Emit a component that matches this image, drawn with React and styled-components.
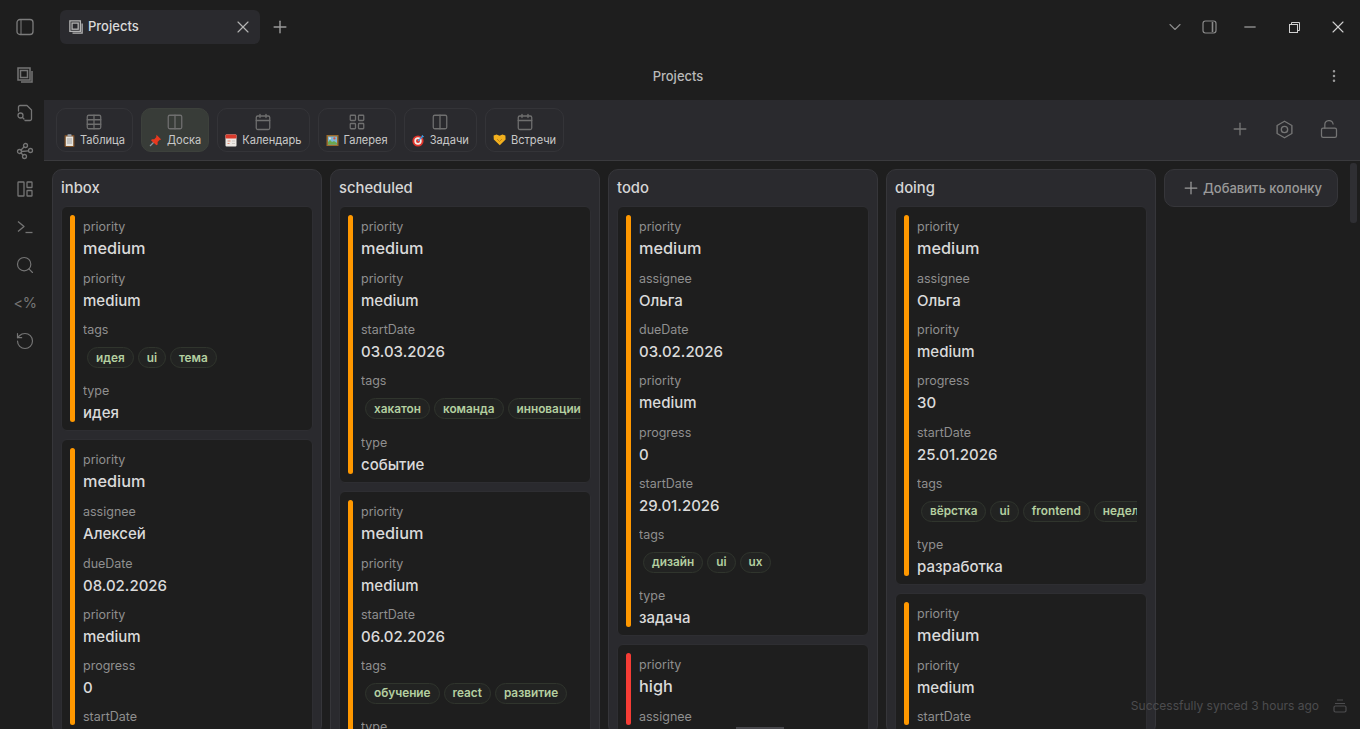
import React from 'react';
import styled, { createGlobalStyle } from 'styled-components';
import {
  Plus,
  X,
  ChevronDown,
  MoreVertical,
  Table,
  Columns2,
  Calendar,
  LayoutGrid,
  LockOpen,
  Search,
  RotateCcw,
  Minus,
} from 'lucide-react';

const GlobalStyle = createGlobalStyle`
  html, body {
    margin: 0;
    height: 100%;
    overflow: hidden;
    background: #1e1e1e;
  }
  body {
    font-family: Inter, "Liberation Sans", sans-serif;
    color: #dadada;
  }
  * { box-sizing: border-box; }
`;

const Stroke = ({ size = 18, children }) => (
  <svg width={size} height={size} viewBox="0 0 18 18" fill="none" stroke="currentColor" strokeWidth="1.3" strokeLinecap="round" strokeLinejoin="round">
    {children}
  </svg>
);

const SidebarIcon = () => (
  <Stroke>
    <rect x="1" y="1.5" width="16" height="15" rx="3" />
    <path d="M5 2v14" strokeWidth="1" />
  </Stroke>
);
const SidebarRightIcon = () => (
  <svg width="15" height="14" viewBox="0 0 15 14" fill="none" stroke="currentColor" strokeWidth="1.2">
    <rect x="1" y="1" width="13" height="12" rx="2.4" />
    <path d="M10.5 2v10" strokeWidth="1.6" />
  </svg>
);
const StackIcon = ({ size = 14 }) => (
  <svg width={size} height={size} viewBox="0 0 16 16" fill="none" stroke="currentColor" strokeWidth="1.5">
    <path d="M15 4v11H4" />
    <rect x="1" y="1" width="12" height="12" />
    <rect x="3.5" y="3.5" width="7" height="7" />
  </svg>
);
const RestoreIcon = () => (
  <svg width="11" height="11" viewBox="0 0 11 11" fill="none" stroke="currentColor" strokeWidth="1">
    <rect x="0.5" y="2.5" width="8" height="8" />
    <path d="M2.5 2.5v-2h8v8h-2" />
  </svg>
);
const FileFindIcon = () => (
  <Stroke>
    <path d="M2.5 7V3A1.5 1.5 0 0 1 4 1.5h7L15.5 6v9a1.5 1.5 0 0 1-1.5 1.5H9" />
    <circle cx="4.5" cy="11.5" r="2.5" />
    <path d="M6.5 13.5l1.5 1.5" />
  </Stroke>
);
const GraphIcon = () => (
  <Stroke>
    <circle cx="3.5" cy="9.5" r="2" />
    <circle cx="9.5" cy="3.5" r="2" />
    <circle cx="14.5" cy="8.5" r="2" />
    <circle cx="8.5" cy="14.5" r="2" />
    <path d="M5 8l3-3M5.5 9.5l7-.7M5 11l2 2" />
  </Stroke>
);
const CanvasIcon = () => (
  <Stroke>
    <rect x="2" y="2" width="6" height="14" rx="0.6" />
    <rect x="11" y="2" width="5" height="5.5" rx="0.6" />
    <rect x="11" y="10.5" width="5" height="5.5" rx="0.6" />
  </Stroke>
);
const PromptIcon = () => (
  <Stroke>
    <path d="M2 3.5l6 5-6 5" strokeLinecap="butt" />
    <path d="M9.5 14.5h7" strokeLinecap="butt" />
  </Stroke>
);
const SettingsIcon = () => (
  <svg width="19" height="19" viewBox="0 0 18 18" fill="none" stroke="currentColor" strokeWidth="1.3" strokeLinejoin="round">
    <path d="M9 1.2l7 4v7.6l-7 4-7-4V5.2z" />
    <circle cx="9" cy="9" r="3" />
  </svg>
);
const ArchiveIcon = () => (
  <svg width="14" height="15" viewBox="0 0 14 15" fill="none" stroke="currentColor" strokeWidth="1.2">
    <rect x="1" y="8" width="12" height="6" rx="1.4" />
    <path d="M2 5.5h10M4 2h6" />
  </svg>
);

const ClipboardEmoji = () => (
  <svg width="11" height="13" viewBox="0 0 11 13">
    <rect x="0.5" y="1" width="10" height="12" rx="1" fill="#7a4f28" />
    <rect x="1.8" y="2.5" width="7.4" height="9.5" fill="#e8e4dc" />
    <path d="M3 5h5M3 7h5M3 9h5" stroke="#8a8f98" strokeWidth="0.8" />
    <rect x="3.5" y="0.2" width="4" height="2.2" rx="0.5" fill="#9aa0a8" />
  </svg>
);
const PinEmoji = () => (
  <svg width="13" height="13" viewBox="0 0 13 13">
    <path d="M1 12l4-4" stroke="#8b97a3" strokeWidth="1.2" />
    <path d="M7.5.8l4.7 4.7-1.6.6-2 2 .1 2.4-1.2.7L2.1 6.4l.7-1.2 2.4.1 2-2z" fill="#e8391f" />
  </svg>
);
const CalendarEmoji = () => (
  <svg width="12" height="13" viewBox="0 0 12 13">
    <rect x="0.5" y="0.5" width="11" height="12" rx="1" fill="#ece8e4" />
    <rect x="0.5" y="0.5" width="11" height="4" rx="1" fill="#d93a2b" />
    <path d="M2.5 7h3M2.5 9.5h2" stroke="#e28a72" strokeWidth="1" />
    <path d="M7 7h3M7 9.5h3" stroke="#c9c6c2" strokeWidth="1" />
  </svg>
);
const PictureEmoji = () => (
  <svg width="13" height="13" viewBox="0 0 13 13">
    <rect x="0.5" y="1" width="12" height="11" fill="#9a6a2c" />
    <rect x="2" y="2.5" width="9" height="8" fill="#7cb7d8" />
    <path d="M2 10.5V8l2-2 2 2 2-1 3 2v1.5z" fill="#6aa84f" />
    <circle cx="8.4" cy="4.4" r="1.1" fill="#d9503f" />
    <rect x="3" y="3.5" width="1.8" height="1.8" fill="#e8e4dc" />
  </svg>
);
const TargetEmoji = () => (
  <svg width="13" height="13" viewBox="0 0 13 13">
    <circle cx="6" cy="7" r="5.6" fill="#e0342b" />
    <circle cx="6" cy="7" r="3.7" fill="#f1ece6" />
    <circle cx="6" cy="7" r="2" fill="#e0342b" />
    <path d="M6 7l5-5" stroke="#3f9be0" strokeWidth="1.2" />
    <path d="M10 .8l2.2 2.2-1.6.3-.9-.9z" fill="#3f9be0" />
  </svg>
);
const HandshakeEmoji = () => (
  <svg width="13" height="12" viewBox="0 0 13 12">
    <path d="M.6 1.5l3-.9 3 1.2 2.8-1.2 3 .9.2 4-5.8 5.8L.8 5.5z" fill="#f2b01e" />
    <path d="M4 5l2.5 2.5L9 5" stroke="#b97a10" strokeWidth="0.8" fill="none" />
  </svg>
);

const views = [
  { name: 'Таблица', icon: Table, emoji: ClipboardEmoji },
  { name: 'Доска', icon: Columns2, emoji: PinEmoji, active: true },
  { name: 'Календарь', icon: Calendar, emoji: CalendarEmoji },
  { name: 'Галерея', icon: LayoutGrid, emoji: PictureEmoji },
  { name: 'Задачи', icon: Columns2, emoji: TargetEmoji },
  { name: 'Встречи', icon: Calendar, emoji: HandshakeEmoji },
];

const med = ['priority', 'medium'];

const columns = [
  {
    title: 'inbox',
    cards: [
      { fields: [med, med, ['tags', ['идея', 'ui', 'тема']], ['type', 'идея']] },
      {
        fields: [med, ['assignee', 'Алексей'], ['dueDate', '08.02.2026'], med, ['progress', '0'], ['startDate']],
      },
    ],
  },
  {
    title: 'scheduled',
    cards: [
      {
        fields: [med, med, ['startDate', '03.03.2026'], ['tags', ['хакатон', 'команда', 'инновации']], ['type', 'событие']],
      },
      {
        fields: [med, med, ['startDate', '06.02.2026'], ['tags', ['обучение', 'react', 'развитие']], ['type']],
      },
    ],
  },
  {
    title: 'todo',
    cards: [
      {
        fields: [
          med,
          ['assignee', 'Ольга'],
          ['dueDate', '03.02.2026'],
          med,
          ['progress', '0'],
          ['startDate', '29.01.2026'],
          ['tags', ['дизайн', 'ui', 'ux']],
          ['type', 'задача'],
        ],
      },
      { high: true, fields: [['priority', 'high'], ['assignee']] },
    ],
  },
  {
    title: 'doing',
    cards: [
      {
        fields: [
          med,
          ['assignee', 'Ольга'],
          med,
          ['progress', '30'],
          ['startDate', '25.01.2026'],
          ['tags', ['вёрстка', 'ui', 'frontend', 'неделя']],
          ['type', 'разработка'],
        ],
      },
      { fields: [med, med, ['startDate']] },
    ],
  },
];

const Shell = styled.div`
  display: flex;
  flex-direction: column;
  height: 729px;
  width: 1360px;
  overflow: hidden;
  position: relative;
  background: #1e1e1e;
`;

const TitleBar = styled.div`
  display: flex;
  align-items: center;
  height: 54px;
  flex: none;
`;

const RibbonTop = styled.div`
  width: 50px;
  display: flex;
  justify-content: center;
  color: #7c7c7c;
`;

const Tab = styled.div`
  width: 200px;
  height: 34px;
  margin-left: 10px;
  border-radius: 6px;
  background: #2a2a2e;
  display: flex;
  align-items: center;
  gap: 5px;
  padding: 0 7px 0 9px;
  font-size: 13px;
  font-weight: 500;
  color: #dadada;
  svg { flex: none; color: #b3b3b3; }
`;

const TabLabel = styled.span`
  flex: 1;
  padding-bottom: 2px;
`;

const TabClose = styled.span`
  display: flex;
  color: #8f8f8f;
`;

const NewTab = styled.span`
  display: flex;
  margin-left: 10px;
  color: #9a9a9a;
`;

const Spacer = styled.div`
  flex: 1;
`;

const WinControls = styled.div`
  display: flex;
  align-items: center;
  color: #d0d0d0;
`;

const WinButton = styled.span`
  display: flex;
  justify-content: center;
  width: ${(p) => p.$w || 44}px;
  margin-right: ${(p) => p.$gap || 0}px;
  color: ${(p) => p.$color || '#d0d0d0'};
`;

const Body = styled.div`
  flex: 1;
  display: flex;
  min-height: 0;
`;

const Ribbon = styled.div`
  width: 44px;
  flex: none;
  display: flex;
  flex-direction: column;
  align-items: center;
  gap: 19px;
  padding: 11px 0 0 6px;
`;

const RibbonItem = styled.span`
  display: flex;
  justify-content: center;
  align-items: center;
  height: 19px;
  font-size: 14.5px;
  letter-spacing: -0.5px;
  color: #757575;
  svg { flex: none; }
`;

const Main = styled.div`
  flex: 1;
  display: flex;
  flex-direction: column;
  min-width: 0;
`;

const ViewHeader = styled.div`
  height: 46px;
  flex: none;
  display: flex;
  align-items: center;
  position: relative;
  padding: 0 18px 2px 0;
  justify-content: flex-end;
  color: #9a9a9a;
`;

const ViewTitle = styled.div`
  position: absolute;
  left: 0;
  right: 48px;
  text-align: center;
  font-size: 13px;
  font-weight: 500;
  color: #b9b9b9;
`;

const Toolbar = styled.div`
  height: 61px;
  flex: none;
  display: flex;
  align-items: flex-start;
  gap: 8px;
  padding: 8px 21px 0 12px;
  background: #2a2a2e;
  border-bottom: 1px solid #3a3a3d;
`;

const ViewTab = styled.div`
  height: 44px;
  display: flex;
  flex-direction: column;
  align-items: center;
  gap: 2px;
  padding: 4px 7px 0;
  border-radius: 10px;
  border: 1px solid ${(p) => (p.$active ? '#3d413c' : '#343438')};
  background: ${(p) => (p.$active ? '#383c38' : 'transparent')};
  color: #6f6f6f;
`;

const ViewName = styled.div`
  display: flex;
  align-items: center;
  gap: 5px;
  font-size: 11.1px;
  line-height: 14px;
  color: #c8c8c8;
  white-space: nowrap;
`;

const ToolActions = styled.div`
  margin-left: auto;
  display: flex;
  align-items: center;
  gap: 25px;
  height: 28px;
  margin-top: 7px;
  color: #757575;
`;

const Board = styled.div`
  flex: 1;
  min-height: 0;
  overflow: hidden;
  display: flex;
  align-items: flex-start;
  gap: 8px;
  padding: 8px 0 0 8px;
`;

const Column = styled.div`
  width: 270px;
  flex: none;
  background: #2a2a2e;
  border: 1px solid #36363a;
  border-radius: 10px;
  padding: 8px 8px 0;
  display: flex;
  flex-direction: column;
  gap: 8px;
`;

const ColumnTitle = styled.div`
  font-size: 14.8px;
  font-weight: 500;
  line-height: 20px;
  color: #d6d6d6;
`;

const Card = styled.div`
  background: #1e1e1e;
  border: 1px solid #2e2e32;
  border-radius: 6px;
  padding: 8px 9px 8px 8px;
  display: flex;
  gap: 8px;
  overflow: hidden;
`;

const Accent = styled.div`
  width: 5px;
  flex: none;
  border-radius: 3px;
  background: ${(p) => (p.$high ? '#f53c35' : '#ff9800')};
`;

const Fields = styled.div`
  flex: 1;
  min-width: 0;
  overflow: hidden;
  display: flex;
  flex-direction: column;
  gap: 11.2px;
  padding-top: 3px;
`;

const Field = styled.div`
  display: flex;
  flex-direction: column;
`;

const Label = styled.div`
  font-size: 12.5px;
  line-height: 17px;
  color: #8f8f8f;
`;

const Value = styled.div`
  font-size: ${(p) => (p.$big ? 16.3 : 15)}px;
  font-weight: 500;
  line-height: ${(p) => (p.$big ? 20 : 19)}px;
  margin-top: ${(p) => (p.$big ? 3 : 4)}px;
  padding-bottom: ${(p) => (p.$big ? 0.8 : 0)}px;
  color: #dadada;
`;

const Tags = styled.div`
  display: flex;
  gap: 4px;
  padding: 9px 4px 3px;
  white-space: nowrap;
`;

const Tag = styled.span`
  height: 21px;
  padding: 0 8px;
  display: flex;
  align-items: center;
  flex: none;
  border-radius: 11px;
  border: 1px solid #30352d;
  background: #222322;
  font-size: 11.8px;
  font-weight: 600;
  color: #b4cfa0;
`;

const AddColumn = styled.div`
  width: 174px;
  height: 38px;
  flex: none;
  display: flex;
  align-items: center;
  justify-content: center;
  gap: 2px;
  padding-left: 1px;
  border-radius: 10px;
  background: #2a2a2e;
  border: 1px solid #36363a;
  font-size: 13px;
  font-weight: 500;
  color: #9a9a9a;
`;

const ScrollThumb = styled.div`
  position: absolute;
  right: 3px;
  top: 163px;
  width: 7px;
  height: 60px;
  border-radius: 3px;
  background: #2f2f33;
`;

const HScrollThumb = styled.div`
  position: absolute;
  left: 736px;
  bottom: 0;
  width: 48px;
  height: 2px;
  background: #48484c;
`;

const StatusBar = styled.div`
  position: absolute;
  right: 13px;
  bottom: 16px;
  display: flex;
  align-items: center;
  gap: 14px;
  font-size: 12px;
  color: #4c4c4e;
`;

function renderField([label, value], i) {
  return (
    <Field key={i}>
      <Label>{label}</Label>
      {Array.isArray(value) ? (
        <Tags>
          {value.map((t) => (
            <Tag key={t}>{t}</Tag>
          ))}
        </Tags>
      ) : (
        value && <Value $big={i === 0}>{value}</Value>
      )}
    </Field>
  );
}

export default function App() {
  return (
    <>
      <GlobalStyle />
      <Shell>
        <TitleBar>
          <RibbonTop>
            <SidebarIcon />
          </RibbonTop>
          <Tab>
            <StackIcon />
            <TabLabel>Projects</TabLabel>
            <TabClose>
              <X size={20} strokeWidth={1.4} />
            </TabClose>
          </Tab>
          <NewTab>
            <Plus size={20} strokeWidth={1.7} />
          </NewTab>
          <Spacer />
          <WinControls>
            <WinButton $w={34} $color="#8a8a8a">
              <ChevronDown size={20} strokeWidth={1.4} />
            </WinButton>
            <WinButton $w={34} $gap={2} $color="#8a8a8a">
              <SidebarRightIcon />
            </WinButton>
            <WinButton>
              <Minus size={18} strokeWidth={1.2} />
            </WinButton>
            <WinButton>
              <RestoreIcon />
            </WinButton>
            <WinButton>
              <X size={20} strokeWidth={1.3} />
            </WinButton>
          </WinControls>
        </TitleBar>
        <Body>
          <Ribbon>
            <RibbonItem>
              <StackIcon size={16} />
            </RibbonItem>
            <RibbonItem>
              <FileFindIcon />
            </RibbonItem>
            <RibbonItem>
              <GraphIcon />
            </RibbonItem>
            <RibbonItem>
              <CanvasIcon />
            </RibbonItem>
            <RibbonItem>
              <PromptIcon />
            </RibbonItem>
            <RibbonItem>
              <Search size={20} strokeWidth={1.4} />
            </RibbonItem>
            <RibbonItem>&lt;%</RibbonItem>
            <RibbonItem>
              <RotateCcw size={20} strokeWidth={1.4} />
            </RibbonItem>
          </Ribbon>
          <Main>
            <ViewHeader>
              <ViewTitle>Projects</ViewTitle>
              <MoreVertical size={16} strokeWidth={1.8} />
            </ViewHeader>
            <Toolbar>
              {views.map((v) => {
                const Icon = v.icon;
                const Emoji = v.emoji;
                return (
                  <ViewTab key={v.name} $active={v.active}>
                    <Icon size={18} strokeWidth={1.7} />
                    <ViewName>
                      <Emoji />
                      {v.name}
                    </ViewName>
                  </ViewTab>
                );
              })}
              <ToolActions>
                <Plus size={20} strokeWidth={1.6} />
                <SettingsIcon />
                <LockOpen size={20} strokeWidth={1.5} />
              </ToolActions>
            </Toolbar>
            <Board>
              {columns.map((col) => (
                <Column key={col.title}>
                  <ColumnTitle>{col.title}</ColumnTitle>
                  {col.cards.map((card, i) => (
                    <Card key={i}>
                      <Accent $high={card.high} />
                      <Fields>{card.fields.map(renderField)}</Fields>
                    </Card>
                  ))}
                </Column>
              ))}
              <AddColumn>
                <Plus size={20} strokeWidth={1.5} />
                Добавить колонку
              </AddColumn>
            </Board>
          </Main>
        </Body>
        <ScrollThumb />
        <HScrollThumb />
        <StatusBar>
          Successfully synced 3 hours ago
          <ArchiveIcon />
        </StatusBar>
      </Shell>
    </>
  );
}
